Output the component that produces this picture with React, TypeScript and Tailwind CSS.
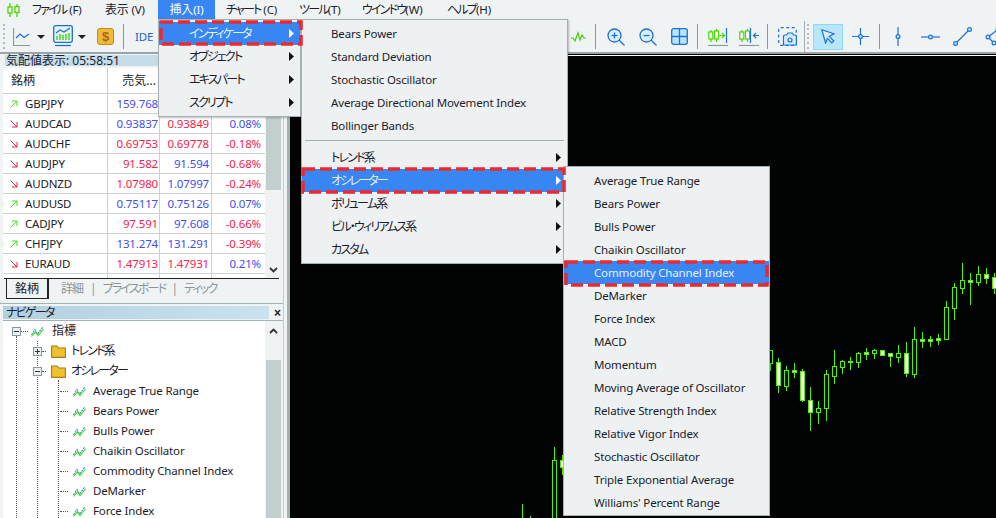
import { ReactNode } from "react";

const FONT = `font-['Noto_Sans','Noto_Sans_CJK_JP',sans-serif]`;
// latin text sits a bit tighter than Noto Sans at 12px
const LATIN = "text-[11.5px] tracking-[-0.15px]";
// narrow kana like the original UI font
const KANA = "text-[12px] tracking-[-1.8px] [font-feature-settings:'palt']";

const hasKana = (s: string) => /[ァ-ヶ]/.test(s);

const K = ({ children }: { children: ReactNode }) => <span className={KANA}>{children}</span>;

type Quote = { name: string; up: boolean; bid: string; ask: string; pct: string; bidUp: boolean; askUp: boolean; pctUp: boolean };

const quotes: Quote[] = [
  { name: "GBPJPY", up: true, bid: "159.768", ask: "", pct: "", bidUp: true, askUp: true, pctUp: true },
  { name: "AUDCAD", up: false, bid: "0.93837", ask: "0.93849", pct: "0.08%", bidUp: true, askUp: false, pctUp: true },
  { name: "AUDCHF", up: false, bid: "0.69753", ask: "0.69778", pct: "-0.18%", bidUp: false, askUp: false, pctUp: false },
  { name: "AUDJPY", up: false, bid: "91.582", ask: "91.594", pct: "-0.68%", bidUp: false, askUp: true, pctUp: false },
  { name: "AUDNZD", up: false, bid: "1.07980", ask: "1.07997", pct: "-0.24%", bidUp: false, askUp: true, pctUp: false },
  { name: "AUDUSD", up: true, bid: "0.75117", ask: "0.75126", pct: "0.07%", bidUp: true, askUp: true, pctUp: true },
  { name: "CADJPY", up: true, bid: "97.591", ask: "97.608", pct: "-0.66%", bidUp: false, askUp: true, pctUp: false },
  { name: "CHFJPY", up: true, bid: "131.274", ask: "131.291", pct: "-0.39%", bidUp: true, askUp: true, pctUp: false },
  { name: "EURAUD", up: false, bid: "1.47913", ask: "1.47931", pct: "0.21%", bidUp: false, askUp: false, pctUp: true },
];

const oscillators = [
  "Average True Range",
  "Bears Power",
  "Bulls Power",
  "Chaikin Oscillator",
  "Commodity Channel Index",
  "DeMarker",
  "Force Index",
  "MACD",
  "Momentum",
  "Moving Average of Oscillator",
  "Relative Strength Index",
  "Relative Vigor Index",
  "Stochastic Oscillator",
  "Triple Exponential Average",
  "Williams' Percent Range",
];

// x, wick top, wick bottom, body top, body bottom, filled
const candles: [number, number, number, number, number, boolean][] = [
  [522, 504, 518, 518, 518, false],
  [530, 516, 518, 518, 518, false],
  [554, 447, 518, 460, 520, false],
  [562, 455, 475, 460, 467, true],
  [770, 350, 371, 350, 363, false],
  [778, 358, 393, 362, 385, true],
  [786, 366, 391, 370, 386, false],
  [794, 363, 378, 370, 372, true],
  [802, 369, 402, 371, 400, true],
  [810, 387, 431, 400, 412, true],
  [818, 401, 424, 408, 412, false],
  [826, 370, 421, 374, 408, false],
  [834, 350, 384, 366, 376, false],
  [842, 360, 374, 361, 367, false],
  [850, 357, 370, 361, 362, true],
  [858, 352, 368, 353, 362, false],
  [866, 348, 360, 352, 354, true],
  [874, 349, 359, 350, 353, false],
  [882, 350, 356, 350, 355, true],
  [890, 353, 367, 353, 356, true],
  [898, 345, 363, 353, 357, false],
  [906, 342, 377, 353, 373, true],
  [914, 327, 378, 339, 374, false],
  [922, 332, 348, 339, 341, true],
  [930, 336, 347, 339, 341, true],
  [938, 334, 345, 338, 340, true],
  [946, 301, 340, 307, 339, false],
  [954, 283, 320, 287, 308, false],
  [962, 263, 294, 280, 288, false],
  [970, 273, 305, 280, 282, true],
  [978, 266, 286, 274, 282, false],
  [986, 268, 284, 274, 278, true],
  [994, 273, 294, 277, 288, true],
];

const Chart = () => (
  <svg className="block h-[462px] w-[706px]" viewBox="290 56 706 462">
    {candles.map(([x, wt, wb, bt, bb, filled]) => (
      <g key={x}>
        <line x1={x + 0.5} x2={x + 0.5} y1={wt} y2={wb} stroke="#55f000" strokeWidth="1" />
        {bb > bt && (
          <rect
            x={x - 1.5}
            y={bt + 0.5}
            width="4"
            height={bb - bt}
            fill={filled ? "#fff" : "#020303"}
            stroke="#55f000"
            strokeWidth="1"
          />
        )}
      </g>
    ))}
  </svg>
);

// red dashed marker round the highlighted menu rows
const DashBox = ({ w, h, className }: { w: number; h: number; className: string }) => (
  <svg className={`pointer-events-none absolute ${className}`} width={w} height={h}>
    <rect x="2" y="2" width={w - 4} height={h - 4} fill="none" stroke="#ea2a2e" strokeWidth="3.5" strokeDasharray="12 5" />
  </svg>
);

const Arrow = ({ white }: { white?: boolean }) => (
  <svg className="absolute right-[6px] top-[7px]" width="5" height="9">
    <path d="M0 0 L5 4.5 L0 9 Z" fill={white ? "#fff" : "#111"} />
  </svg>
);

const MenuRow = ({ label, left, active, sub }: { label: string; left: string; active?: boolean; sub?: boolean }) => (
  <div
    className={`relative h-[23px] whitespace-nowrap leading-[23px] ${hasKana(label) ? KANA : LATIN} ${left} ${
      active ? "bg-[#3786f3] text-[#e8f2ff]" : "text-[#1c1c2c]"
    }`}
  >
    {label}
    {sub && <Arrow white={active} />}
  </div>
);

const Panel = ({ className, children }: { className: string; children: ReactNode }) => (
  <div className={`absolute z-10 border border-[#a4b1b4] bg-[#edf1f2] shadow-[1px_1px_2px_rgba(0,0,0,0.25)] ${className}`}>
    {children}
  </div>
);

const Grip = () => (
  <div className="mx-[2px] grid h-[26px] w-[3px] gap-[2px]">
    {[0, 1, 2, 3, 4, 5].map((i) => (
      <div key={i} className="h-[2px] w-[2px] bg-[#b4bcc0]" />
    ))}
  </div>
);

const Sep = ({ className = "" }: { className?: string }) => <div className={`h-[25px] w-[1px] bg-[#8b979b] ${className}`} />;

const Caret = ({ className = "" }: { className?: string }) => (
  <svg className={className} width="8" height="4">
    <path d="M0 0 H8 L4 4 Z" fill="#222" />
  </svg>
);

const BLUE = "#1f6fd6";

const LogoIcon = () => (
  <svg width="13" height="14" viewBox="0 0 13 14" fill="none" stroke="#47d800" strokeWidth="1.3">
    <path d="M3 0 V14 M10 1 V14" />
    <rect x="1" y="4" width="4" height="6" fill="#fff" />
    <rect x="8" y="3.5" width="4" height="6" fill="#fff" />
  </svg>
);

const LineChartIcon = () => (
  <svg width="17" height="18" fill="none" strokeWidth="1.2">
    <path d="M0.5 0 V17.5 H17" stroke="#8b979b" />
    <path d="M3 10 L7 6 L11 9.5 L16 6" stroke={BLUE} />
  </svg>
);

const TemplateIcon = () => (
  <svg width="20" height="23" fill="none">
    <rect x="0.7" y="0.7" width="18.6" height="16.6" rx="2" stroke={BLUE} strokeWidth="1.3" fill="#e4f3fb" />
    <path d="M3 8 L7 5 L11 7 L17 3" stroke={BLUE} strokeWidth="1.2" />
    <path d="M4 15 V11 M7 15 V9 M10 15 V10 M13 15 V9 M16 15 V8" stroke="#45d400" strokeWidth="1.4" />
    <path d="M2 20.5 H18" stroke={BLUE} strokeWidth="1.3" />
  </svg>
);

const DollarIcon = () => (
  <div className="flex h-[17px] w-[17px] items-center justify-center rounded-[3px] border border-[#c98a14] bg-[#f0b93a] font-['Liberation_Sans',sans-serif] text-[13px] font-bold leading-none text-[#a9690c]">
    $
  </div>
);

const WaveIcon = () => (
  <svg width="15" height="12" fill="none" stroke="#3ed400" strokeWidth="1.2">
    <path d="M0 7 H2 L4 10 L7 2 L9 9 L11 4 L13 7 H15" />
  </svg>
);

const ZoomIcon = ({ plus }: { plus?: boolean }) => (
  <svg width="18" height="18" fill="none" stroke={BLUE} strokeWidth="1.3">
    <circle cx="7.5" cy="7.5" r="6.5" fill="#d9f0fb" />
    <path d="M4.5 7.5 H10.5" />
    {plus && <path d="M7.5 4.5 V10.5" />}
    <path d="M12 12 L17.5 17.5" />
  </svg>
);

const GridIcon = () => (
  <svg width="17" height="17" fill="none" stroke={BLUE} strokeWidth="1.3">
    <rect x="0.7" y="0.7" width="15.6" height="15.6" rx="2" fill="#b8e5fb" />
    <path d="M8.5 0.7 V16.3 M0.7 8.5 H16.3" />
  </svg>
);

const ShiftIcon = ({ flip }: { flip?: boolean }) => (
  <svg width="20" height="18" fill="none" strokeWidth="1.2">
    <path d="M3 2 V14 M8.5 1 V14" stroke="#45d800" />
    <rect x="0.8" y="4" width="4" height="7" fill="#fff" stroke="#45d800" />
    <rect x="6.5" y="3" width="4" height="8" fill="#fff" stroke="#45d800" />
    {flip ? (
      <path d="M11.5 0 V15 M20 7.5 H14.5 M17 5 L14.5 7.5 L17 10" stroke={BLUE} />
    ) : (
      <>
        <path d="M18.5 0 V15" stroke={BLUE} />
        <path d="M11.5 7.5 H16.5 M14 5 L16.5 7.5 L14 10" stroke="#45d800" />
      </>
    )}
    <path d="M0 17.5 H20" stroke="#8b979b" />
  </svg>
);

const CameraIcon = () => (
  <svg width="19" height="19" fill="none" stroke={BLUE} strokeWidth="1.2">
    <rect x="0.7" y="0.7" width="17.6" height="17.6" rx="2" strokeDasharray="3 2.5" />
    <path d="M5.5 18 V9 Q5.5 8 7 8 H8.5 L10 6 H14 L15.5 8 H17 Q18.4 8 18.4 9 V18 Z" fill="#d3eefb" />
    <circle cx="12" cy="13" r="2" fill="#d3eefb" />
  </svg>
);

const CursorIcon = () => (
  <svg width="14" height="15" viewBox="0 0 14 15" fill="#d2effa" stroke={BLUE} strokeWidth="1.2">
    <path d="M0.8 0.8 L13 4.8 L8.3 7.3 L12.8 12 L10.8 14 L6.4 9.3 L4.6 14 Z" />
  </svg>
);

const Node = ({ cx, cy }: { cx: number; cy: number }) => (
  <circle cx={cx} cy={cy} r="1.9" fill="#c9ecfa" stroke={BLUE} strokeWidth="1.2" />
);

const CrossIcon = () => (
  <svg width="17" height="17" fill="none" stroke={BLUE} strokeWidth="1.2">
    <path d="M8.5 0 V17 M0 8.5 H17" />
    <Node cx={8.5} cy={8.5} />
  </svg>
);

const VLineIcon = () => (
  <svg width="6" height="19" fill="none" stroke={BLUE} strokeWidth="1.2">
    <path d="M3 0 V19" />
    <Node cx={3} cy={9.5} />
  </svg>
);

const HLineIcon = () => (
  <svg width="19" height="6" fill="none" stroke={BLUE} strokeWidth="1.2">
    <path d="M0 3 H19" />
    <Node cx={9.5} cy={3} />
  </svg>
);

const TrendIcon = () => (
  <svg width="19" height="19" fill="none" stroke={BLUE} strokeWidth="1.2">
    <path d="M2.5 16.5 L16.5 2.5" />
    <Node cx={2.5} cy={16.5} />
    <Node cx={16.5} cy={2.5} />
  </svg>
);

const ChannelIcon = () => (
  <svg width="19" height="19" fill="none" stroke={BLUE} strokeWidth="1.2">
    <path d="M3 10 L13 2.5 M3 10 L9 16" />
    <Node cx={13} cy={2.5} />
    <Node cx={3} cy={10} />
    <Node cx={9} cy={16} />
  </svg>
);

const Toolbar = () => (
  <div className="flex h-[35px] shrink-0 items-center overflow-hidden border-b-[2px] border-[#98a4a8] bg-[#f0f3f4] pt-[2px] [&>*]:shrink-0">
    <div className="ml-[1px]">
      <Grip />
    </div>
    <div className="ml-[5px]"><LineChartIcon /></div>
    <Caret className="ml-[7px]" />
    <div className="ml-[8px]"><TemplateIcon /></div>
    <Caret className="ml-[5px]" />
    <div className="ml-[11px]"><DollarIcon /></div>
    <Sep className="ml-[9px]" />
    <span className={`ml-[11px] w-[18px] text-[#1f5fc8] ${LATIN}`}>IDE</span>
    {/* hidden behind the open menu */}
    <div className="ml-[418px]"><WaveIcon /></div>
    <Sep className="ml-[9px]" />
    <div className="ml-[11px]"><ZoomIcon plus /></div>
    <div className="ml-[14px]"><ZoomIcon /></div>
    <div className="ml-[14px]"><GridIcon /></div>
    <Sep className="ml-[9px]" />
    <div className="ml-[10px]"><ShiftIcon /></div>
    <div className="ml-[11px]"><ShiftIcon flip /></div>
    <Sep className="ml-[8px]" />
    <div className="ml-[10px]"><CameraIcon /></div>
    <div className="ml-[7px] h-full w-[1px] bg-[#a4b1b4]" />
    <Grip />
    <div className="ml-[1px] flex h-[26px] w-[30px] items-center justify-center border border-[#8fd8fb] bg-[#b8e6fa]"><CursorIcon /></div>
    <div className="ml-[9px]"><CrossIcon /></div>
    <Sep className="ml-[10px]" />
    <div className="ml-[15px]"><VLineIcon /></div>
    <div className="ml-[20px]"><HLineIcon /></div>
    <div className="ml-[13px]"><TrendIcon /></div>
    <div className="ml-[13px]"><ChannelIcon /></div>
  </div>
);

const MenuBar = () => (
  <div className={`flex h-[19px] shrink-0 items-center whitespace-nowrap bg-[#f0f3f4] text-[#1c1c2c] ${LATIN}`}>
    <div className="ml-[7px] w-[25px] shrink-0"><LogoIcon /></div>
    <span className="w-[73px] shrink-0"><K>ファイル</K> (F)</span>
    <span className="w-[53px] shrink-0"><span className="text-[12px]">表示</span> (V)</span>
    <span className="flex h-full w-[57px] shrink-0 items-center justify-center bg-[#3786f3] text-white"><span className="text-[12px]">挿入</span>(I)</span>
    <span className="ml-[11px] w-[73px] shrink-0"><K>チャート</K> (C)</span>
    <span className="w-[63px] shrink-0"><K>ツール</K>(T)</span>
    <span className="w-[85px] shrink-0"><K>ウインドウ</K>(W)</span>
    <span className="shrink-0"><K>ヘルプ</K>(H)</span>
  </div>
);

const TrendArrow = ({ up }: { up: boolean }) => (
  <svg width="8" height="8" fill="none" stroke={up ? "#3fe01a" : "#d8264e"} strokeWidth="1">
    {up ? <path d="M0.5 7.5 L7 1 M2 1 H7 V6" /> : <path d="M0.5 0.5 L7 7 M2 7 H7 V2" />}
  </svg>
);

const priceColor = (up: boolean) => (up ? "text-[#3f4df2]" : "text-[#f6214c]");

const ScrollChevron = ({ up }: { up?: boolean }) => (
  <svg width="9" height="6" fill="none" stroke="#333" strokeWidth="1.8">
    <path d={up ? "M1 5 L4.5 1.5 L8 5" : "M1 1 L4.5 4.5 L8 1"} />
  </svg>
);

const COLS = "border-r border-[#c9d2d4]";

const MarketWatch = () => (
  <div className="flex h-[249px] shrink-0 flex-col">
    <div className="ml-[5px] mt-[1px] h-[11px] bg-[#c5dde9] pl-[1px] text-[12px] leading-[11px] text-[#1c1c2c]">気配値表示: 05:58:51</div>
    <div className="ml-[3px] mt-[2px] flex h-[210px] overflow-hidden">
      <div className="w-[262px] bg-white">
        <div className="flex h-[25px] items-center text-[12px] text-[#222]">
          <div className={`w-[105px] pl-[8px] leading-[25px] ${COLS}`}>銘柄</div>
          <div className={`w-[52px] pr-[3px] text-right leading-[25px] ${COLS}`}>売気...</div>
          <div className={`w-[52px] leading-[25px] ${COLS}`}>&nbsp;</div>
          <div className="w-[53px] leading-[25px]">&nbsp;</div>
        </div>
        {quotes.map((q) => (
          <div key={q.name} className={`flex h-[20px] items-center border-t border-[#c9d2d4] leading-[19px] ${LATIN}`}>
            <div className={`flex w-[105px] items-center pl-[7px] text-[#222] ${COLS}`}>
              <TrendArrow up={q.up} />
              <span className="ml-[7px]">{q.name}</span>
            </div>
            <div className={`w-[52px] pr-[1px] text-right ${COLS} ${priceColor(q.bidUp)}`}>{q.bid}</div>
            <div className={`w-[52px] pr-[2px] text-right ${COLS} ${priceColor(q.askUp)}`}>{q.ask || "\u00a0"}</div>
            <div className={`w-[53px] pr-[4px] text-right ${priceColor(q.pctUp)}`}>{q.pct || "\u00a0"}</div>
          </div>
        ))}
        <div className="flex h-[5px] border-t border-[#c9d2d4]">
          <div className={`w-[105px] ${COLS}`} />
          <div className={`w-[52px] ${COLS}`} />
          <div className={`w-[52px] ${COLS}`} />
        </div>
      </div>
      <div className="flex w-[18px] flex-col bg-[#f0f3f4] pl-[1px]">
        <div className="h-[122px] w-[15px] bg-[#c3cfcf]" />
        <div className="flex-1" />
        <div className="mb-[5px] ml-[3px]"><ScrollChevron /></div>
      </div>
    </div>
    <div className="mx-[4px] flex h-[24px] items-start whitespace-nowrap border-t border-[#222] text-[12px] text-[#8a9599]">
      <div className="ml-[2px] flex h-[20px] w-[43px] items-center justify-center border-b border-l border-r-[2px] border-[#222] bg-[#f0f3f4] text-[#222]">銘柄</div>
      <span className="ml-[12px] leading-[19px] tracking-[-1px]">詳細</span>
      <span className="ml-[7px] leading-[19px]">|</span>
      <span className={`ml-[6px] leading-[19px] ${KANA}`}>プライスボード</span>
      <span className="ml-[6px] leading-[19px]">|</span>
      <span className={`ml-[6px] leading-[19px] ${KANA}`}>ティック</span>
    </div>
  </div>
);

const IndicatorIcon = () => (
  <svg width="13" height="11" fill="none" strokeWidth="1.1">
    <path d="M0.5 9 L4 3.5 L6.5 8 L12 1" stroke="#1f86d6" strokeDasharray="2 1" />
    <path d="M0.5 10.5 L4.5 6 L7 9.5 L12.5 3" stroke="#3fd81a" />
  </svg>
);

const FolderIcon = () => (
  <svg width="15" height="13" fill="#efc12c" stroke="#b07a18" strokeWidth="1.1">
    <path d="M0.6 1 H6 L7.5 3 H14.4 V12.4 H0.6 Z" />
  </svg>
);

const TreeBox = ({ plus }: { plus?: boolean }) => (
  <div className="flex h-[9px] w-[9px] items-center justify-center border border-[#8a979c] bg-[#eef1f3]">
    <svg width="7" height="7" stroke="#333" strokeWidth="1">
      <path d="M1 3.5 H6" />
      {plus && <path d="M3.5 1 V6" />}
    </svg>
  </div>
);

const Dots = ({ className }: { className: string }) => (
  <div className={`border-t border-dotted border-[#555] ${className}`} />
);

const TreeRow = ({ children, className = "" }: { children: ReactNode; className?: string }) => (
  <div className={`flex h-[20px] items-center whitespace-nowrap text-[#1c1c2c] ${className}`}>{children}</div>
);

const Navigator = () => (
  <div className="flex min-h-0 flex-1 flex-col border-t border-[#a4b1b4]">
    <div className="ml-[3px] mt-[2px] flex h-[13px] shrink-0 items-center">
      <div className={`h-full w-[266px] bg-[linear-gradient(90deg,#b3d0e0,#c9e2ee)] pl-[3px] leading-[13px] text-[#1c1c2c] ${KANA}`}>ナビゲータ</div>
      <span className="ml-[5px] font-['Liberation_Sans',sans-serif] text-[12px] font-bold leading-none text-[#222]">×</span>
    </div>
    <div className="ml-[3px] mt-[1px] flex min-h-0 flex-1 overflow-hidden border-t border-[#a4b1b4]">
      <div className="relative w-[262px] bg-white">
        {/* tree guide lines */}
        <div className="absolute bottom-0 left-[13px] top-[15px] border-l border-dotted border-[#555]" />
        <div className="absolute bottom-0 left-[34px] top-[20px] border-l border-dotted border-[#555]" />
        <div className="absolute bottom-0 left-[55px] top-[59px] border-l border-dotted border-[#555]" />
        <TreeRow className="pl-[9px]">
          <TreeBox />
          <Dots className="w-[7px]" />
          <span className="ml-[3px]"><IndicatorIcon /></span>
          <span className="ml-[8px] text-[12px]">指標</span>
        </TreeRow>
        <TreeRow className="pl-[30px]">
          <div className="relative"><TreeBox plus /></div>
          <Dots className="w-[4px]" />
          <span className="ml-[5px]"><FolderIcon /></span>
          <span className={`ml-[5px] ${KANA}`}>トレンド系</span>
        </TreeRow>
        <TreeRow className="pl-[30px]">
          <div className="relative"><TreeBox /></div>
          <Dots className="w-[4px]" />
          <span className="ml-[5px]"><FolderIcon /></span>
          <span className={`ml-[5px] ${KANA}`}>オシレーター</span>
        </TreeRow>
        {oscillators.slice(0, 7).map((name) => (
          <TreeRow key={name} className="pl-[57px]">
            <Dots className="w-[8px]" />
            <span className="ml-[5px]"><IndicatorIcon /></span>
            <span className={`ml-[7px] ${LATIN}`}>{name}</span>
          </TreeRow>
        ))}
      </div>
      <div className="flex w-[18px] flex-col bg-[#f0f3f4] pl-[1px]">
        <div className="ml-[3px] mt-[7px]"><ScrollChevron up /></div>
        <div className="mt-[26px] w-[15px] flex-1 bg-[#c3cfcf]" />
      </div>
    </div>
  </div>
);

export default function App() {
  return (
    <div className={`relative flex h-[518px] w-[996px] flex-col overflow-hidden bg-[#f0f3f4] ${FONT}`}>
      <MenuBar />
      <Toolbar />
      <div className="flex min-h-0 flex-1">
        <div className="flex w-[284px] shrink-0 flex-col border-r border-[#c3cfcf]">
          <MarketWatch />
          <Navigator />
        </div>
        <div className="w-[3px] shrink-0 bg-[#f0f3f4]" />
        <div className="w-[3px] shrink-0 bg-[#a4b1b4]" />
        <div className="flex min-w-0 flex-1 flex-col bg-[#020303]">
          <div className="mt-[1px] h-[1px] shrink-0 bg-white" />
          <Chart />
        </div>
      </div>

      {/* open menus */}
      <Panel className="left-[158px] top-[19px] w-[143px] py-[2px]">
        <MenuRow label="インディケータ" left="pl-[30px]" active sub />
        <MenuRow label="オブジェクト" left="pl-[30px]" sub />
        <MenuRow label="エキスパート" left="pl-[30px]" sub />
        <MenuRow label="スクリプト" left="pl-[30px]" sub />
      </Panel>
      <DashBox w={144} h={26} className="left-[159px] top-[20px] z-30" />

      <Panel className="left-[301px] top-[19px] z-20 w-[267px] py-[2px]">
        <MenuRow label="Bears Power" left="pl-[29px]" />
        <MenuRow label="Standard Deviation" left="pl-[29px]" />
        <MenuRow label="Stochastic Oscillator" left="pl-[29px]" />
        <MenuRow label="Average Directional Movement Index" left="pl-[29px]" />
        <MenuRow label="Bollinger Bands" left="pl-[29px]" />
        <div className="mx-[3px] my-[4px] h-[1px] translate-y-[-1px] bg-[#a4b1b4]" />
        <MenuRow label="トレンド系" left="pl-[29px]" sub />
        <MenuRow label="オシレーター" left="pl-[29px]" active sub />
        <MenuRow label="ボリューム系" left="pl-[29px]" sub />
        <MenuRow label="ビル・ウィリアムス系" left="pl-[29px]" sub />
        <MenuRow label="カスタム" left="pl-[29px]" sub />
      </Panel>
      <DashBox w={265} h={27} className="left-[301px] top-[167px] z-30" />

      <Panel className="left-[563px] top-[166px] z-20 w-[207px] pb-[1px] pt-[2px]">
        {oscillators.map((name) => (
          <MenuRow key={name} label={name} left="pl-[30px]" active={name === "Commodity Channel Index"} />
        ))}
      </Panel>
      <DashBox w={205} h={27} className="left-[564px] top-[260px] z-30" />
    </div>
  );
}
